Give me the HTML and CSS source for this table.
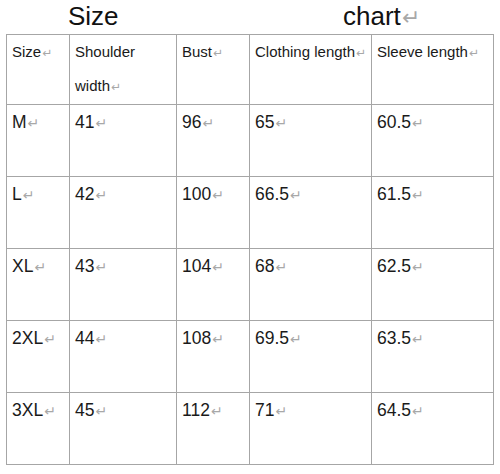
FILE: index.html
```html
<!DOCTYPE html>
<html>
<head>
<meta charset="utf-8">
<link rel="stylesheet" href="styles.css">
</head>
<body>
<div class="page">
  <div class="title"><span class="t1">Size</span><span class="t2">chart<span class="ret">↵</span></span></div>
  <table class="chart">
    <colgroup>
      <col class="c1"><col class="c2"><col class="c3"><col class="c4"><col class="c5">
    </colgroup>
    <tr class="head">
      <td>Size<span class="ret">↵</span></td>
      <td><span class="ln">Shoulder</span><br><span class="ln">width</span><span class="ret">↵</span></td>
      <td>Bust<span class="ret">↵</span></td>
      <td>Clothing length<span class="ret">↵</span></td>
      <td>Sleeve length<span class="ret">↵</span></td>
    </tr>
    <tr><td>M<span class="ret">↵</span></td><td>41<span class="ret">↵</span></td><td>96<span class="ret">↵</span></td><td>65<span class="ret">↵</span></td><td>60.5<span class="ret">↵</span></td></tr>
    <tr><td>L<span class="ret">↵</span></td><td>42<span class="ret">↵</span></td><td>100<span class="ret">↵</span></td><td>66.5<span class="ret">↵</span></td><td>61.5<span class="ret">↵</span></td></tr>
    <tr><td>XL<span class="ret">↵</span></td><td>43<span class="ret">↵</span></td><td>104<span class="ret">↵</span></td><td>68<span class="ret">↵</span></td><td>62.5<span class="ret">↵</span></td></tr>
    <tr><td>2XL<span class="ret">↵</span></td><td>44<span class="ret">↵</span></td><td>108<span class="ret">↵</span></td><td>69.5<span class="ret">↵</span></td><td>63.5<span class="ret">↵</span></td></tr>
    <tr><td>3XL<span class="ret">↵</span></td><td>45<span class="ret">↵</span></td><td>112<span class="ret">↵</span></td><td>71<span class="ret">↵</span></td><td>64.5<span class="ret">↵</span></td></tr>
  </table>
</div>
</body>
</html>
```

FILE: styles.css
```css
html, body {
  margin: 0;
  padding: 0;
  background: #fff;
}

.page {
  padding-left: 6px;
  font-family: "Liberation Sans", Arial, sans-serif;
  color: #1a1a1a;
}

.title {
  display: flex;
  padding-left: 62px;
  font-size: 26px;
  line-height: 33px;
  height: 34px;
  color: #111;
}

.title .t1 {
  width: 275px;
}

.title .ret {
  font-size: 22px;
}

.ret {
  font-family: "DejaVu Sans", sans-serif;
  color: #a8a8a8;
  font-size: 0.8em;
  margin-left: 1px;
}

.chart {
  border-collapse: collapse;
  table-layout: fixed;
  width: 487px;
}

.c1 { width: 63px; }
.c2 { width: 107px; }
.c3 { width: 73px; }
.c4 { width: 122px; }
.c5 { width: 122px; }

.chart td {
  border: 1px solid #a6a6a6;
  padding: 0 0 0 5px;
  vertical-align: top;
  font-size: 17.5px;
  line-height: 35px;
  height: 71px;
  white-space: nowrap;
}

.chart .head td {
  font-size: 15px;
  line-height: 34px;
  height: 69px;
}
```
